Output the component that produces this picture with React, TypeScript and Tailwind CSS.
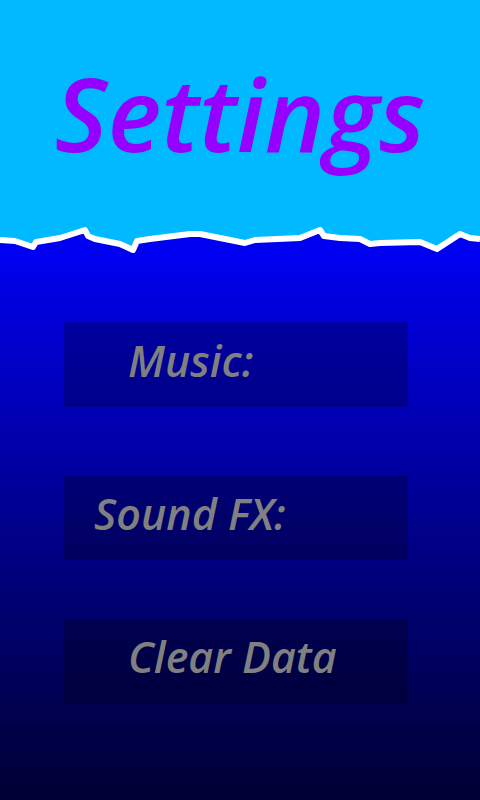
import React from "react";

const wave: [number, number][] = [
  [0, 240], [15, 241], [33, 247], [36, 242], [60, 238], [85, 230], [88, 236], [95, 239],
  [120, 244], [133, 250], [137, 241], [150, 239], [190, 234], [200, 234], [245, 243],
  [255, 240], [300, 238], [320, 230], [324, 236], [340, 238], [360, 239], [370, 244],
  [380, 243], [420, 242], [437, 249], [460, 234], [470, 238], [480, 239],
];

function Shore() {
  const line = wave.map(([x, y], i) => `${i ? "L" : "M"}${x},${y - 215}`).join(" ");
  return (
    <svg width="480" height="40" viewBox="0 0 480 40" className="block">
      <rect width="480" height="40" fill="#00b9ff" />
      <path d={`${line} L480,40 L0,40 Z`} fill="#0000f0" />
      <path d={line} fill="none" stroke="#ffffff" strokeWidth="6" strokeLinejoin="round" />
    </svg>
  );
}

export default function App() {
  const font = { fontFamily: '"Open Sans", "Noto Sans", sans-serif' };

  return (
    <div className="w-[480px] h-[800px] flex flex-col overflow-hidden" style={font}>
      {/* Header */}
      <div className="h-[215px] bg-[#00b9ff] flex justify-center pt-[53px]">
        <h1 className="text-[102px] leading-[120px] italic font-semibold text-[#9500ff]">
          Settings
        </h1>
      </div>

      <Shore />

      {/* Options */}
      <div className="flex-1 bg-gradient-to-b from-[#0000f0] to-[#000034] flex flex-col items-start pl-[64px] pt-[67px]">
        <div className="w-[344px] h-[85px] bg-black/25 flex items-center pl-[64px] pb-[8px]">
          <span className="text-[43px] leading-[60px] italic font-semibold text-[#808080]">Music:</span>
        </div>
        <div className="w-[344px] h-[84px] mt-[69px] bg-black/25 flex items-center pl-[30px] pb-[8px]">
          <span className="text-[43px] leading-[60px] italic font-semibold text-[#808080]">Sound FX:</span>
        </div>
        <div className="w-[344px] h-[84px] mt-[59px] bg-black/25 flex items-center pl-[64px] pb-[8px]">
          <span className="text-[43px] leading-[60px] italic font-semibold text-[#808080]">Clear Data</span>
        </div>
      </div>
    </div>
  );
}
